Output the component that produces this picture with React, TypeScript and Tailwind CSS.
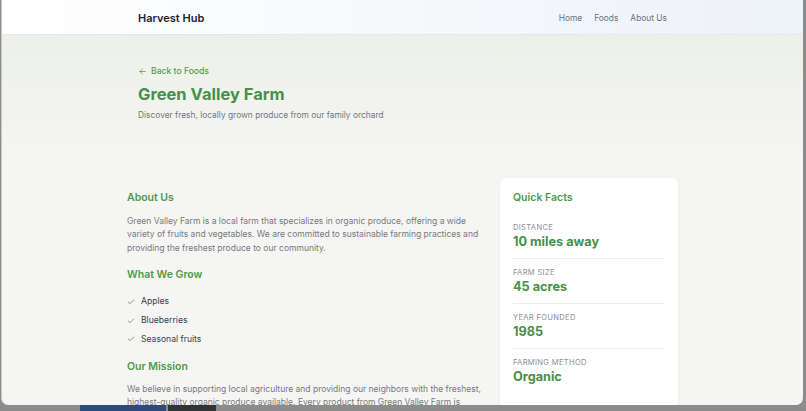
import React from 'react'
import { ArrowLeft, Check } from 'lucide-react'

const facts = [
    { label: 'Distance', value: '10 miles away' },
    { label: 'Farm Size', value: '45 acres' },
    { label: 'Year Founded', value: '1985' },
    { label: 'Farming Method', value: 'Organic' },
]

const grows = ['Apples', 'Blueberries', 'Seasonal fruits']

export default function App() {
    return (
        <div className="w-[806px] h-[411px] overflow-hidden bg-[#8c8c8c] font-['Inter',sans-serif]">
            <div className="ml-[1px] w-[802px] h-[405px] overflow-hidden rounded-b-[7px] border-l border-[#c9c9c9] bg-[#f5f5f3]">
                {/* header */}
                <div className="h-[35px] border-b border-[#e6e8e6] bg-gradient-to-r from-white to-[#edf2f8]">
                    <div className="mx-auto flex h-full w-[529px] items-center justify-between pt-[2px]">
                        <p className="text-[11px] font-semibold text-[#1f2328]">Harvest Hub</p>
                        <div className="flex gap-[12px] text-[8.4px] text-[#6b7280]">
                            <span>Home</span>
                            <span>Foods</span>
                            <span>About Us</span>
                        </div>
                    </div>
                </div>

                {/* hero */}
                <div className="h-[125px] bg-gradient-to-b from-[#edf0e9] to-[#f5f5f3]">
                    <div className="mx-auto w-[529px] pt-[30px]">
                        <div className="flex items-center gap-[4px] text-[8.6px] font-medium leading-[13px] text-[#4f9a4c]">
                            <ArrowLeft size={9} strokeWidth={2} />
                            <span>Back to Foods</span>
                        </div>
                        <h1 className="mt-[5px] text-[16.5px] font-bold leading-[22px] text-[#47904a]">Green Valley Farm</h1>
                        <p className="mt-[3px] text-[8.4px] leading-[14px] text-[#737780]">Discover fresh, locally grown produce from our family orchard</p>
                    </div>
                </div>

                {/* main */}
                <div className="mx-auto flex w-[551px] gap-[17px] pt-[18px]">
                    <div className="w-[356px] pt-[13px]">
                        <h2 className="text-[10.5px] font-semibold leading-[14px] text-[#4f9a4c]">About Us</h2>
                        <p className="mt-[10px] text-[8.5px] leading-[13.3px] text-[#767a82]">
                            Green Valley Farm is a local farm that specializes in organic produce, offering a wide variety of fruits and vegetables. We are committed to sustainable farming practices and providing the freshest produce to our community.
                        </p>
                        <h2 className="mt-[13px] text-[10.5px] font-semibold leading-[14px] text-[#4f9a4c]">What We Grow</h2>
                        <ul className="mt-[13.5px] flex flex-col gap-[5.5px]">
                            {grows.map(g => (
                                <li key={g} className="flex items-center gap-[6px] text-[8.6px] leading-[13.2px] text-[#374151]">
                                    <Check size={8} strokeWidth={2.5} className="text-[#4f9a4c]" />
                                    <span>{g}</span>
                                </li>
                            ))}
                        </ul>
                        <h2 className="mt-[14px] text-[10.5px] font-semibold leading-[14px] text-[#4f9a4c]">Our Mission</h2>
                        <p className="mt-[9px] text-[8.5px] leading-[13.3px] text-[#767a82]">
                            We believe in supporting local agriculture and providing our neighbors with the freshest, highest-quality organic produce available. Every product from Green Valley Farm is grown with care and harvested at peak ripeness.
                        </p>
                    </div>

                    <div className="h-[260px] w-[178px] rounded-[6px] bg-white px-[13px] pt-[13px] shadow-[0_1px_3px_rgba(0,0,0,0.06)]">
                        <h3 className="text-[10.5px] font-semibold leading-[14px] text-[#4f9a4c]">Quick Facts</h3>
                        <div className="mt-[16.5px]">
                            {facts.map((f, i) => (
                                <div key={f.label} className={i < facts.length - 1 ? 'border-b border-[#ececec] pb-[8px] mb-[8px]' : ''}>
                                    <p className="text-[7.6px] uppercase leading-[11px] tracking-[0.3px] text-[#8a8f98]">{f.label}</p>
                                    <p className="mt-[1px] text-[12.7px] font-bold leading-[16px] text-[#47904a]">{f.value}</p>
                                </div>
                            ))}
                        </div>
                    </div>
                </div>
            </div>

            {/* dock strip */}
            <div className="flex h-[6px]">
                <div className="ml-[80px] w-[86px] bg-[#2c4a7a]" />
                <div className="ml-[2px] w-[48px] bg-[#2f3437]" />
            </div>
        </div>
    )
}
